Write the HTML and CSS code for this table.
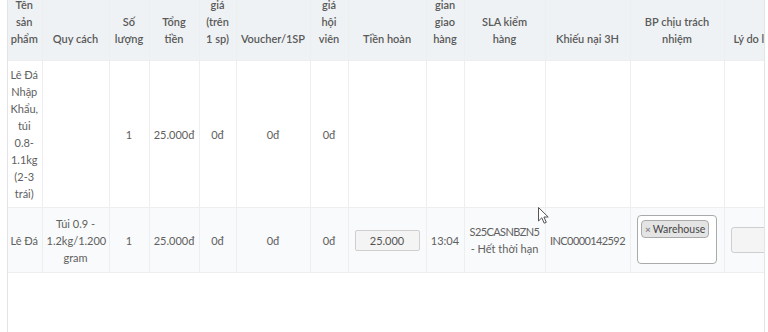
FILE: index.html
```html
<!DOCTYPE html>
<html lang="vi">
<head>
<meta charset="utf-8">
<title>Đơn hoàn</title>
<link rel="stylesheet" href="styles.css">
</head>
<body>
<div class="panel">
  <table class="grid">
    <colgroup>
      <col class="w-name"><col class="w-spec"><col class="w-qty"><col class="w-total"><col class="w-unit">
      <col class="w-voucher"><col class="w-member"><col class="w-refund"><col class="w-time"><col class="w-sla">
      <col class="w-complaint"><col class="w-dept"><col class="w-reason">
    </colgroup>
    <thead>
      <tr>
        <th class="first">Tên sản phẩm</th>
        <th>Quy cách</th>
        <th>Số lượng</th>
        <th>Tổng tiền</th>
        <th>Đơn giá (trên 1 sp)</th>
        <th>Voucher/1SP</th>
        <th>Đơn giá hội viên</th>
        <th>Tiền hoàn</th>
        <th>Thời gian giao hàng</th>
        <th>SLA kiểm<br>hàng</th>
        <th>Khiếu nại 3H</th>
        <th>BP chịu trách nhiệm</th>
        <th class="reason">Lý do lỗi</th>
      </tr>
    </thead>
    <tbody>
      <tr>
        <td class="first">Lê Đá Nhập Khẩu, túi 0.8-1.1kg (2-3 trái)</td>
        <td></td>
        <td>1</td>
        <td>25.000đ</td>
        <td>0đ</td>
        <td>0đ</td>
        <td>0đ</td>
        <td></td>
        <td></td>
        <td></td>
        <td></td>
        <td></td>
        <td></td>
      </tr>
      <tr class="hovered">
        <td class="first">Lê Đá</td>
        <td>Túi 0.9 - 1.2kg/1.200 gram</td>
        <td>1</td>
        <td>25.000đ</td>
        <td>0đ</td>
        <td>0đ</td>
        <td>0đ</td>
        <td><input class="amount" type="text" value="25.000" readonly></td>
        <td>13:04</td>
        <td><span class="code">S25CASNBZN5</span> - Hết thời hạn</td>
        <td><span class="code">INC0000142592</span></td>
        <td>
          <div class="tags"><span class="tag"><span class="tag-x">×</span>Warehouse</span></div>
        </td>
        <td class="reason"><input class="reason-input" type="text" readonly></td>
      </tr>
    </tbody>
  </table>
</div>
<svg class="cursor" width="12" height="18" viewBox="0 0 12 18" aria-hidden="true">
  <path d="M0.5 0.5 L0.5 14 L3.8 10.8 L6.2 16.2 L8.3 15.3 L5.9 10 L10.2 10 Z" fill="#fff" stroke="#555" stroke-width="1" stroke-linejoin="round"/>
</svg>
</body>
</html>
```
FILE: styles.css
```css
html, body {
  margin: 0;
  height: 332px;
  overflow: hidden;
  background: #fff;
}

body {
  position: relative;
  font-family: Lato, "Open Sans", "DejaVu Sans", sans-serif;
  font-size: 11px;
  line-height: 17px;
  color: #606060;
}

.panel {
  margin: -26px 0 0 7px;
  width: 756px;
  height: 420px;
  border-left: 1px solid #e2e4e6;
  border-right: 1px solid #e2e4e6;
  overflow: hidden;
}

.grid {
  border-collapse: collapse;
  table-layout: fixed;
  width: 817px;
}

.w-name { width: 34px; }
.w-spec { width: 67px; }
.w-qty { width: 40px; }
.w-total { width: 50px; }
.w-unit { width: 37px; }
.w-voucher { width: 74px; }
.w-member { width: 38px; }
.w-refund { width: 78px; }
.w-time { width: 38px; }
.w-sla { width: 81px; }
.w-complaint { width: 85px; }
.w-dept { width: 94px; }
.w-reason { width: 101px; }

.grid th,
.grid td {
  border-left: 1px solid #eceef0;
  text-align: center;
  overflow: visible;
}

.grid th.first,
.grid td.first {
  border-left: 0;
  padding-left: 2px;
  padding-right: 3px;
}

.grid th {
  background: #eff2f4;
  font-weight: 600;
  color: #5a5a5a;
  vertical-align: bottom;
  padding: 5px 4px 13px;
}

.grid th.reason {
  text-align: left;
  padding-left: 9px;
}

.grid td {
  padding: 5px 4px;
  vertical-align: middle;
  border-top: 1px solid #eceef0;
}

.grid tbody tr:last-child td {
  border-bottom: 1px solid #eceef0;
}

.grid tr.hovered td {
  background: #f9fafb;
}

.code {
  letter-spacing: -0.6px;
}

.amount {
  display: block;
  box-sizing: border-box;
  width: 65px;
  height: 21px;
  margin: 0 auto;
  padding: 0;
  border: 1px solid #cfcfcf;
  border-radius: 2px;
  background: #f4f4f4;
  font: inherit;
  color: #555;
  text-align: center;
}

.tags {
  box-sizing: border-box;
  width: 80px;
  height: 49px;
  margin: 2px auto 3px;
  padding: 4px 3px;
  border: 1px solid #aaa;
  border-radius: 4px;
  background: #fff;
  text-align: left;
}

.tag {
  display: inline-block;
  box-sizing: border-box;
  height: 18px;
  padding: 0 3px 0 3px;
  border: 1px solid #aaa;
  border-radius: 4px;
  background: #e4e4e4;
  color: #444;
  font-size: 10.5px;
  line-height: 16px;
}

.tag-x {
  margin-right: 2px;
  color: #888;
  font-weight: 700;
  font-size: 10px;
}

.grid td.reason {
  text-align: left;
  padding-left: 6px;
}

.reason-input {
  display: block;
  box-sizing: border-box;
  width: 92px;
  height: 26px;
  margin: 0;
  border: 1px solid #cfcfcf;
  border-radius: 3px;
  background: #f4f4f4;
}

.cursor {
  position: absolute;
  left: 538px;
  top: 207px;
}
```
